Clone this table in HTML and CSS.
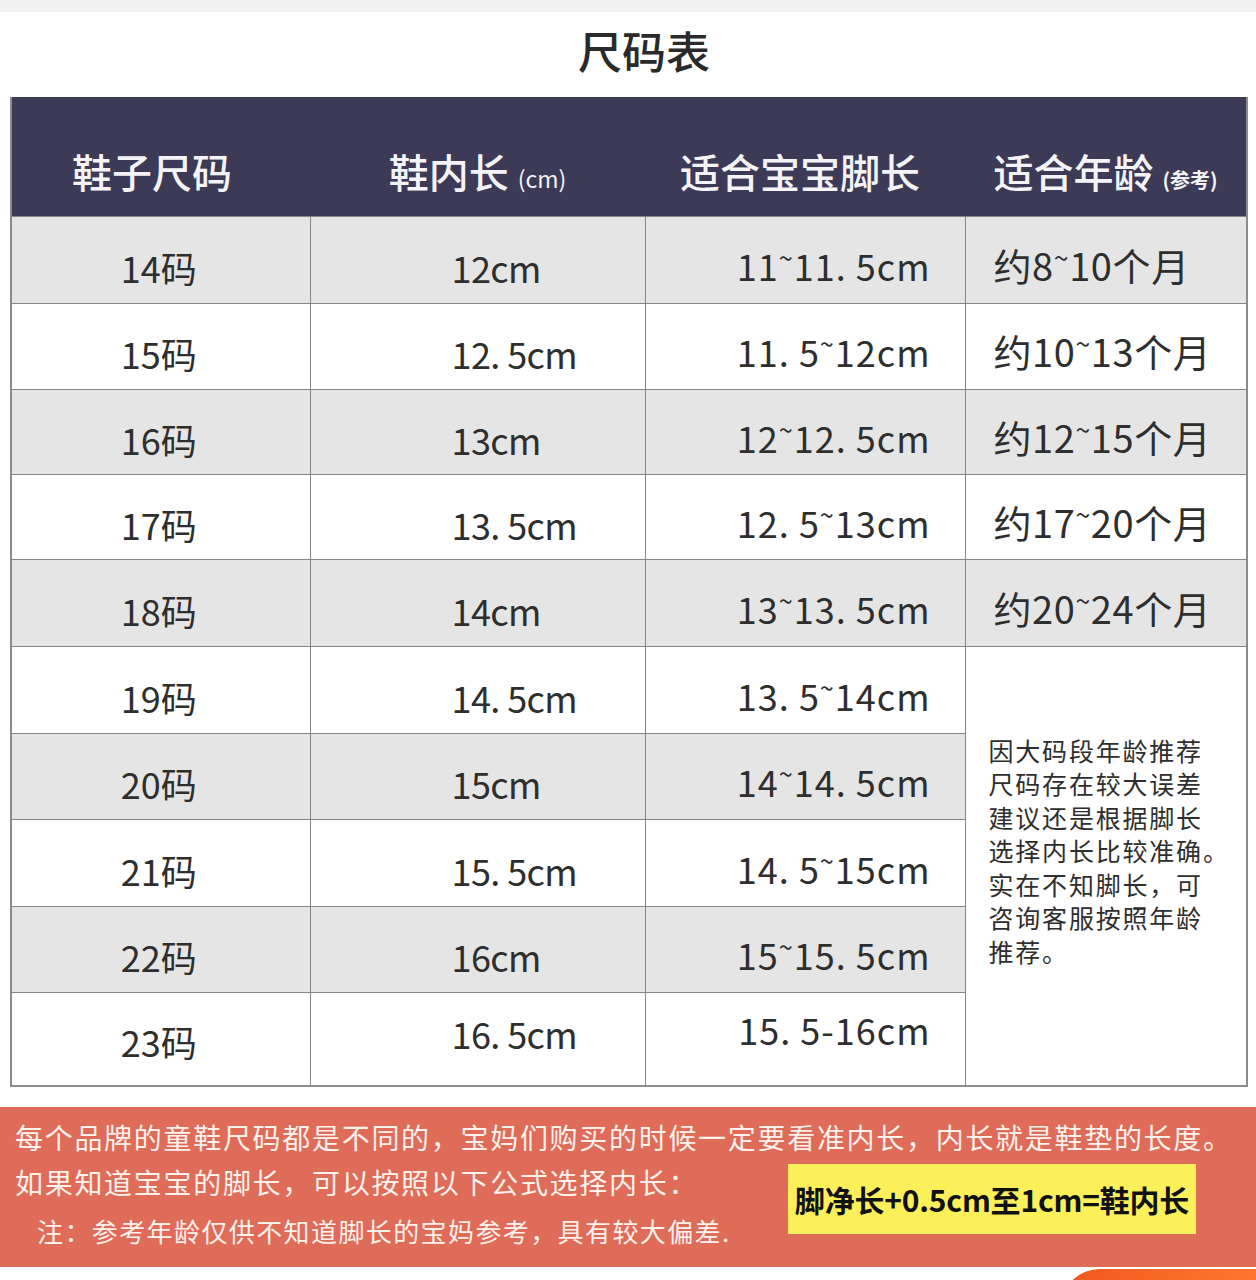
FILE: index.html
```html
<!DOCTYPE html>
<html lang="zh-CN">
<head>
<meta charset="utf-8">
<title>尺码表</title>
<link rel="stylesheet" href="styles.css">
</head>
<body>
<div class="topbar"></div>
<h1 class="title">尺码表</h1>
<table class="size-table">
  <colgroup>
    <col class="c1"><col class="c2"><col class="c3"><col class="c4">
  </colgroup>
  <thead>
    <tr class="head">
      <th>鞋子尺码</th>
      <th>鞋内长 <small class="unit">(cm)</small></th>
      <th>适合宝宝脚长</th>
      <th>适合年龄 <small class="unit ref">(参考)</small></th>
    </tr>
  </thead>
  <tbody>
    <tr class="gray r1"><td class="size">14码</td><td class="inner">12cm</td><td class="foot">11<span class="tl">~</span>11. 5cm</td><td class="age">约8<span class="tl">~</span>10个月</td></tr>
    <tr class="r2"><td class="size">15码</td><td class="inner">12. 5cm</td><td class="foot">11. 5<span class="tl">~</span>12cm</td><td class="age">约10<span class="tl">~</span>13个月</td></tr>
    <tr class="gray r3"><td class="size">16码</td><td class="inner">13cm</td><td class="foot">12<span class="tl">~</span>12. 5cm</td><td class="age">约12<span class="tl">~</span>15个月</td></tr>
    <tr class="r4"><td class="size">17码</td><td class="inner">13. 5cm</td><td class="foot">12. 5<span class="tl">~</span>13cm</td><td class="age">约17<span class="tl">~</span>20个月</td></tr>
    <tr class="gray r5"><td class="size">18码</td><td class="inner">14cm</td><td class="foot">13<span class="tl">~</span>13. 5cm</td><td class="age">约20<span class="tl">~</span>24个月</td></tr>
    <tr class="r6"><td class="size">19码</td><td class="inner">14. 5cm</td><td class="foot">13. 5<span class="tl">~</span>14cm</td>
      <td class="note" rowspan="5">因大码段年龄推荐<br>尺码存在较大误差<br>建议还是根据脚长<br>选择内长比较准确。<br>实在不知脚长，可<br>咨询客服按照年龄<br>推荐。</td></tr>
    <tr class="gray r7"><td class="size">20码</td><td class="inner">15cm</td><td class="foot">14<span class="tl">~</span>14. 5cm</td></tr>
    <tr class="r8"><td class="size">21码</td><td class="inner">15. 5cm</td><td class="foot">14. 5<span class="tl">~</span>15cm</td></tr>
    <tr class="gray r9"><td class="size">22码</td><td class="inner">16cm</td><td class="foot">15<span class="tl">~</span>15. 5cm</td></tr>
    <tr class="r10"><td class="size">23码</td><td class="inner">16. 5cm</td><td class="foot">15. 5-16cm</td></tr>
  </tbody>
</table>
<section class="banner">
  <p class="line line1">每个品牌的童鞋尺码都是不同的，宝妈们购买的时候一定要看准内长，内长就是鞋垫的长度。</p>
  <div class="banner-row">
    <div class="banner-left">
      <p class="line line2">如果知道宝宝的脚长，可以按照以下公式选择内长：</p>
      <p class="line line3">注：参考年龄仅供不知道脚长的宝妈参考，具有较大偏差.</p>
    </div>
    <div class="formula">脚净长+0.5cm至1cm=鞋内长</div>
  </div>
</section>
<div class="footer">
  <div class="pill"></div>
</div>
</body>
</html>
```
FILE: styles.css
```css
* { box-sizing: border-box; }
html, body { margin: 0; padding: 0; background: #ffffff; }
body {
  font-family: "Noto Sans CJK SC", "Noto Sans", sans-serif;
  color: #2e2e2e;
  width: 1256px;
  height: 1280px;
  overflow: hidden;
}
.topbar { height: 12px; background: #f0f0f0; }
.title {
  margin: 0;
  height: 85px;
  padding: 8px 0 0 32px;
  text-align: center;
  font-size: 44px;
  line-height: 60px;
  font-weight: 500;
  color: #2a2a2a;
}
.size-table {
  margin-left: 10px;
  width: 1236px;
  border-collapse: collapse;
  table-layout: fixed;
  border: 2px solid #8c8c8c;
  border-top: none;
}
.c1 { width: 299px; }
.c2 { width: 335px; }
.c3 { width: 320px; }
.c4 { width: 282px; }
.head { height: 119px; background: #3c3a56; }
.head th {
  color: #f4f4f8;
  font-size: 40px;
  font-weight: 500;
  padding: 30px 0 0 0;
  text-align: center;
  white-space: nowrap;
  border: none;
}
.head th:first-child { padding-right: 18px; }
.head th:nth-child(3) { padding-right: 10px; }
.unit { font-size: 23px; font-weight: 400; }
.unit.ref { font-size: 20px; font-weight: 700; }
tbody td {
  border: 1px solid #858585;
  font-size: 36px;
  line-height: 44px;
  padding: 14px 0 0 0;
  white-space: nowrap;
  color: #2e2e2e;
}
tbody tr { height: 86px; }
tbody tr.r1, tbody tr.r5, tbody tr.r6, tbody tr.r8 { height: 87px; }
tbody tr.r3, tbody tr.r4 { height: 85px; }
tbody tr.r10 { height: 94px; }
tr.gray td { background: #e5e5e5; }
tr.gray td.note, td.note { background: #ffffff; }
.size { text-align: center; padding-right: 4px !important; }
.inner { padding-left: 141px !important; text-align: left; letter-spacing: -0.6px; }
.foot { text-align: right; padding-right: 34px !important; padding-top: 10px !important; letter-spacing: 1px; }
.age { padding-left: 28px !important; font-size: 38px !important; padding-top: 10px !important; letter-spacing: 0.6px; }
tr.r10 td { padding-top: 4px; }
tr.r10 td.inner { padding-top: 0; padding-bottom: 12px; }
tr.r10 td.foot { padding-top: 0 !important; padding-bottom: 20px; }
.tl { font-size: 0.7em; vertical-align: 0.5em; line-height: 0; }
td.note {
  vertical-align: middle;
  font-size: 25px;
  line-height: 33.5px;
  letter-spacing: 1.8px;
  padding: 0 0 30px 23px;
  color: #2e2e2e;
  white-space: nowrap;
}
.banner {
  margin-top: 20px;
  height: 160px;
  background: #df6b59;
  padding: 10px 0 0 15px;
  color: #fff1ec;
}
.line { margin: 0; font-size: 28px; line-height: 40px; white-space: nowrap; letter-spacing: 1.7px; }
.banner-row { display: flex; align-items: flex-start; margin-top: 3px; }
.banner-left { width: 773px; flex: none; }
.line2 { line-height: 44px; }
.line3 { font-size: 26px; line-height: 44px; padding-left: 22px; margin-top: 5px; letter-spacing: 1.4px; }
.formula {
  margin-top: 4px;
  width: 408px;
  height: 70px;
  background: #fcf05a;
  color: #111111;
  font-size: 30px;
  font-weight: 700;
  line-height: 70px;
  text-align: center;
  white-space: nowrap;
  letter-spacing: -0.2px;
}
.footer { display: flex; justify-content: flex-end; padding-top: 2px; }
.pill {
  width: 196px;
  height: 40px;
  border-radius: 40px 0 0 0;
  background: linear-gradient(90deg, #f0581c, #ff7630);
}
```
